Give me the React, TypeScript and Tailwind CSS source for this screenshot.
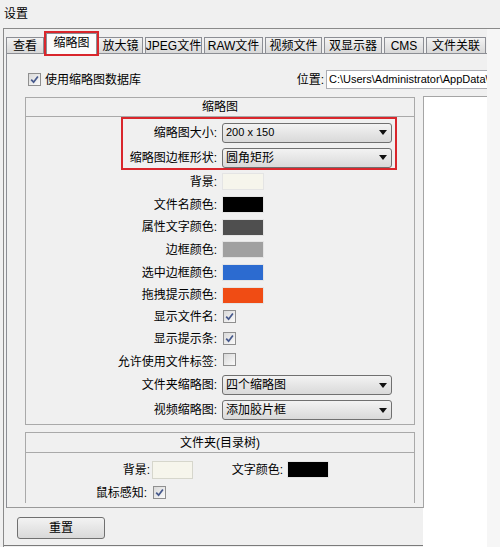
import React from 'react';

const tabs = [
  { name: '查看', w: 'w-[38px]', ml: 'ml-0' },
  { name: '缩略图', w: 'w-[51px]', ml: 'ml-[2px]', active: true },
  { name: '放大镜', w: 'w-[45px]', ml: 'ml-[1px]' },
  { name: 'JPEG文件', w: 'w-[57px]', ml: 'ml-[2px]' },
  { name: 'RAW文件', w: 'w-[59px]', ml: 'ml-[2px]' },
  { name: '视频文件', w: 'w-[57px]', ml: 'ml-[2px]' },
  { name: '双显示器', w: 'w-[58px]', ml: 'ml-[2px]' },
  { name: 'CMS', w: 'w-[40px]', ml: 'ml-[2px]' },
  { name: '文件关联', w: 'w-[60px]', ml: 'ml-[2px]' },
];

const swatchRows = [
  { label: '背景:', color: 'bg-[#f6f5ec]', h: 'h-[23px]' },
  { label: '文件名颜色:', color: 'bg-black', h: 'h-[23px]' },
  { label: '属性文字颜色:', color: 'bg-[#4f4f4f]', h: 'h-[22px]' },
  { label: '边框颜色:', color: 'bg-[#a0a0a0]', h: 'h-[23px]' },
  { label: '选中边框颜色:', color: 'bg-[#2c6bd0]', h: 'h-[23px]' },
  { label: '拖拽提示颜色:', color: 'bg-[#f04c14]', h: 'h-[22px]' },
];

const checkRows = [
  { label: '显示文件名:', checked: true, h: 'h-[22px]' },
  { label: '显示提示条:', checked: true, h: 'h-[22px]' },
  { label: '允许使用文件标签:', checked: false, h: 'h-[23px]' },
];

function Check({ checked }: { checked: boolean }) {
  return (
    <span className="inline-flex h-[13px] w-[13px] shrink-0 items-center justify-center border border-[#8f8f8f] bg-linear-to-br from-[#d9d9d9] to-[#fafafa]">
      {checked && (
        <svg width="9" height="9" viewBox="0 0 9 9">
          <path d="M1.2 4.6 L3.6 7.2 L7.9 1.4" stroke="#46598c" strokeWidth="1.7" fill="none" />
        </svg>
      )}
    </span>
  );
}

function Select({ value, small }: { value: string; small?: boolean }) {
  return (
    <div className="flex h-[20px] w-[170px] items-center justify-between rounded-[3px] border border-[#707070] bg-linear-to-b from-[#f3f3f3] to-[#d9d9d9] pl-[3px] pr-[4px]">
      <span className={small ? 'text-[11px] leading-none' : 'leading-none'}>{value}</span>
      <svg width="8" height="5" viewBox="0 0 8 5">
        <polygon points="0,0 8,0 4,5" fill="#111" />
      </svg>
    </div>
  );
}

function Label({ text }: { text: string }) {
  return <span className="w-[191px] shrink-0 text-right leading-none">{text}</span>;
}

export default function App() {
  return (
    <div className="h-[547px] w-[500px] overflow-hidden bg-[#f0f0f0] text-[12px] text-black font-[family-name:Liberation_Sans,Noto_Sans_CJK_SC,sans-serif]">
      <div className="h-[28px] pl-[4px] pt-[6px] leading-[16px]">设置</div>

      <div className="ml-[3px] flex h-[519px] border-l border-t border-[#8a8a8a]">
        <div className="flex w-[483px] flex-col">
          {/* tab strip */}
          <div className="flex h-[25px] items-end pl-[2px]">
            {tabs.map((t) =>
              t.active ? (
                <div
                  key={t.name}
                  className={`relative z-10 ${t.ml} ${t.w} flex h-[21px] items-center justify-center whitespace-nowrap border border-b-0 border-[#8c8e94] bg-[#fbfbfb] pb-[3px] outline-2 outline-[#d9262c]`}
                >
                  {t.name}
                </div>
              ) : (
                <div
                  key={t.name}
                  className={`${t.ml} ${t.w} mb-[1px] flex h-[16px] items-center justify-center whitespace-nowrap border border-b-0 border-[#8c8e94] bg-linear-to-b from-[#f3f3f3] to-[#d8d8d8] leading-none`}
                >
                  {t.name}
                </div>
              )
            )}
          </div>

          {/* tab pane */}
          <div className="-mt-px ml-[2px] flex flex-col border-l border-t border-[#8c8e94]">
            <div className="flex h-[42px] items-start pl-[21px] pt-[16px]">
              <div className="flex h-[19px] items-center gap-[4px]">
                <Check checked />
                <span className="leading-none">使用缩略图数据库</span>
              </div>
              <div className="ml-auto flex h-[19px] items-center">
                <span className="mr-[2px] leading-none">位置:</span>
                <div className="flex h-[19px] w-[161px] items-center overflow-hidden whitespace-nowrap border border-r-0 border-[#abadb3] bg-white pl-[2px] text-[11px]">
                  C:\Users\Administrator\AppData\
                </div>
              </div>
            </div>

            <div className="flex">
              {/* left scroll area */}
              <div className="flex h-[412px] w-[416px] flex-col border-b border-[#9a9a9a] pb-[4px] pl-[18px] pt-[1px]">
                <div className="flex-1 overflow-hidden">
                  <div className="w-[390px] border border-[#a9a9a9]">
                    <div className="flex h-[19px] items-center justify-center border-b border-[#a9a9a9] leading-none">缩略图</div>
                    <div className="relative pb-[1px] pt-[3px]">
                      <div className="flex h-[25px] items-center">
                        <Label text="缩略图大小:" />
                        <div className="ml-[5px]">
                          <Select value="200 x 150" small />
                        </div>
                      </div>
                      <div className="flex h-[25px] items-center">
                        <Label text="缩略图边框形状:" />
                        <div className="ml-[5px]">
                          <Select value="圆角矩形" />
                        </div>
                      </div>
                      {swatchRows.map((r) => (
                        <div key={r.label} className={`flex ${r.h} items-center`}>
                          <Label text={r.label} />
                          <span className={`ml-[5px] h-[17px] w-[42px] border border-[#e4e4e4] ${r.color}`} />
                        </div>
                      ))}
                      {checkRows.map((r) => (
                        <div key={r.label} className={`flex ${r.h} items-center`}>
                          <Label text={r.label} />
                          <span className="ml-[6px]">
                            <Check checked={r.checked} />
                          </span>
                        </div>
                      ))}
                      <div className="flex h-[24px] items-center">
                        <Label text="文件夹缩略图:" />
                        <div className="ml-[5px]">
                          <Select value="四个缩略图" />
                        </div>
                      </div>
                      <div className="flex h-[26px] items-center">
                        <Label text="视频缩略图:" />
                        <div className="ml-[5px]">
                          <Select value="添加胶片框" />
                        </div>
                      </div>
                      {/* red annotation */}
                      <div className="absolute left-[95px] top-0 h-[53px] w-[276px] border-2 border-[#d9262c]" />
                    </div>
                  </div>

                  <div className="mt-[7px] w-[390px] border border-[#a9a9a9]">
                    <div className="flex h-[20px] items-center justify-center border-b border-[#a9a9a9] leading-none">文件夹(目录树)</div>
                    <div className="pt-[5px]">
                      <div className="flex h-[23px] items-center">
                        <span className="w-[124px] text-right leading-none">背景:</span>
                        <span className="ml-[2px] h-[18px] w-[41px] border border-[#d6d6cc] bg-[#f6f5ec]" />
                        <span className="w-[90px] text-right leading-none">文字颜色:</span>
                        <span className="ml-[4px] h-[17px] w-[42px] border border-[#e4e4e4] bg-black" />
                      </div>
                      <div className="flex h-[23px] items-center">
                        <span className="w-[121px] text-right leading-none">鼠标感知:</span>
                        <span className="ml-[6px]">
                          <Check checked />
                        </span>
                      </div>
                      <div className="h-[40px]" />
                    </div>
                  </div>
                </div>
              </div>

              {/* right preview panel */}
              <div className="h-[412px] w-[64px] border-l border-t border-[#a5a5a5] bg-white" />
            </div>
          </div>

          {/* bottom bar */}
          <div className="flex">
            <div className="h-[38px] w-[419px] border-b border-[#7a7a7a] pl-[13px] pt-[9px]">
              <button className="flex h-[22px] w-[88px] items-center justify-center rounded-[3px] border border-[#707070] bg-linear-to-b from-[#f3f3f3] to-[#d9d9d9] leading-none">
                重置
              </button>
            </div>
            <div className="h-[39px] flex-1 bg-white" />
          </div>
        </div>
        <div className="flex-1 bg-[#f6f6f6]" />
      </div>
    </div>
  );
}
